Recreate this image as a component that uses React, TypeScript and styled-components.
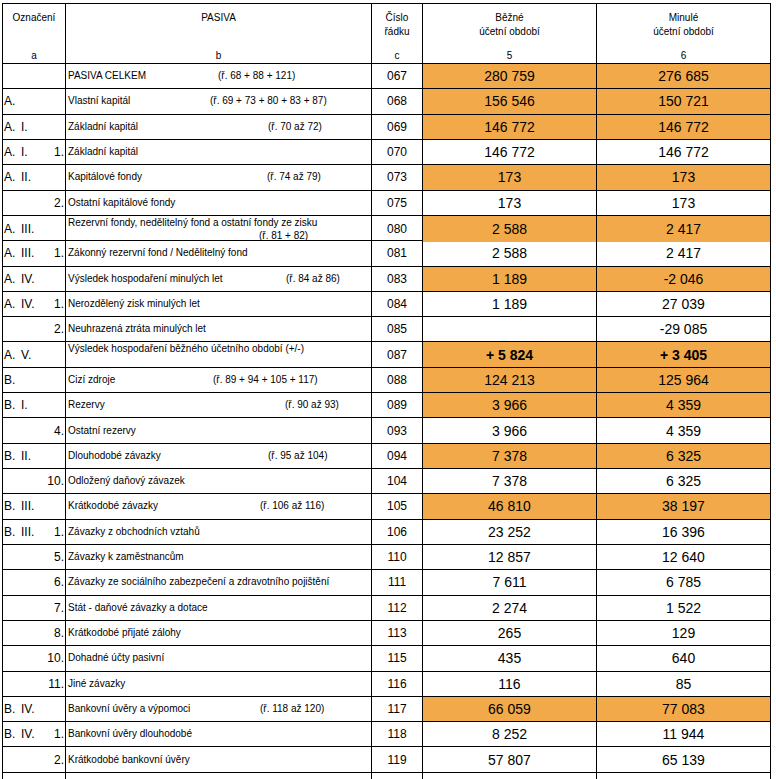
import React from 'react';
import styled, { createGlobalStyle } from 'styled-components';

const GlobalStyle = createGlobalStyle`
  html, body { margin: 0; padding: 0; background: #ffffff; }
  body { font-family: "Liberation Sans", Arial, sans-serif; color: #000; }
`;

const COLS = '63px 306px 51px 174px 174px';
const ORANGE = '#f1a94a';
const ROW_H = 25.32;

const Sheet = styled.div`
  margin: 3px 0 0 2px;
  width: 768px;
  border-left: 1px solid #000;
  border-top: 1px solid #000;
  display: flex;
  flex-direction: column;
`;

const HeaderRow = styled.div`
  display: grid;
  grid-template-columns: ${COLS};
  height: 60px;
  box-sizing: border-box;
  border-bottom: 1px solid #000;
`;

const HeaderCell = styled.div`
  box-sizing: border-box;
  border-right: 1px solid #000;
  display: flex;
  flex-direction: column;
  align-items: center;
  justify-content: space-between;
  padding-top: 7px;
  font-size: 10px;
  line-height: 14px;
  text-align: center;
  white-space: nowrap;
`;

const HeaderTitle = styled.div`
  display: flex;
  flex-direction: column;
  align-items: center;
`;

const HeaderKey = styled.div`
  font-size: 10px;
  line-height: 14px;
`;

const Row = styled.div<{ $h: number }>`
  display: grid;
  grid-template-columns: ${COLS};
  height: ${(p) => p.$h}px;
  box-sizing: border-box;
  border-bottom: 1px solid #000;
`;

const MarkCell = styled.div`
  box-sizing: border-box;
  border-right: 1px solid #000;
  display: grid;
  grid-template-columns: 17px 1fr auto;
  align-items: center;
  padding: 0 1px;
  font-size: 12px;
  white-space: nowrap;
`;

const NumMark = styled.span`
  text-align: right;
`;

const LabelCell = styled.div<{ $off: number; $top?: boolean }>`
  box-sizing: border-box;
  border-right: 1px solid #000;
  display: grid;
  grid-template-columns: ${(p) => p.$off}px 1fr;
  align-items: center;
  align-content: ${(p) => (p.$top ? 'start' : 'center')};
  padding-left: 2px;
  font-size: 10px;
  line-height: ${(p) => (p.$top ? '13px' : '12px')};
  white-space: nowrap;
  overflow: visible;
`;

const Label = styled.span<{ $wide?: boolean }>`
  grid-column: ${(p) => (p.$wide ? '1 / span 2' : '1')};
`;

const Formula = styled.span`
  grid-column: 2;
`;

const LineCell = styled.div`
  box-sizing: border-box;
  border-right: 1px solid #000;
  display: flex;
  align-items: center;
  justify-content: center;
  font-size: 12px;
`;

const ValueCell = styled.div<{ $hl?: boolean; $bold?: boolean }>`
  box-sizing: border-box;
  border-right: 1px solid #000;
  background: ${(p) => (p.$hl ? ORANGE : 'transparent')};
  display: flex;
  align-items: center;
  justify-content: center;
  font-size: 14px;
  font-weight: ${(p) => (p.$bold ? 700 : 400)};
`;

type Item = {
  l?: string;
  r?: string;
  n?: string;
  label: string;
  f?: string;
  fx?: number;
  two?: boolean;
  top?: boolean;
  c: string;
  v5: string;
  v6: string;
  hl?: boolean;
  bold?: boolean;
};

const rows: Item[] = [
  { label: 'PASIVA CELKEM', f: '(ř. 68 + 88 + 121)', fx: 218, c: '067', v5: '280 759', v6: '276 685', hl: true },
  { l: 'A.', label: 'Vlastní kapitál', f: '(ř. 69 + 73 + 80 + 83 + 87)', fx: 210, c: '068', v5: '156 546', v6: '150 721', hl: true },
  { l: 'A.', r: 'I.', label: 'Základní kapitál', f: '(ř. 70 až 72)', fx: 268, c: '069', v5: '146 772', v6: '146 772', hl: true },
  { l: 'A.', r: 'I.', n: '1.', label: 'Základní kapitál', c: '070', v5: '146 772', v6: '146 772' },
  { l: 'A.', r: 'II.', label: 'Kapitálové fondy', f: '(ř. 74 až 79)', fx: 267, c: '073', v5: '173', v6: '173', hl: true },
  { n: '2.', label: 'Ostatní kapitálové fondy', c: '075', v5: '173', v6: '173' },
  { l: 'A.', r: 'III.', label: 'Rezervní fondy, nedělitelný fond a ostatní fondy ze zisku', f: '(ř. 81 + 82)', fx: 259, two: true, top: true, c: '080', v5: '2 588', v6: '2 417', hl: true },
  { l: 'A.', r: 'III.', n: '1.', label: 'Zákonný rezervní fond / Nedělitelný fond', c: '081', v5: '2 588', v6: '2 417' },
  { l: 'A.', r: 'IV.', label: 'Výsledek hospodaření minulých let', f: '(ř. 84 až 86)', fx: 286, c: '083', v5: '1 189', v6: '-2 046', hl: true },
  { l: 'A.', r: 'IV.', n: '1.', label: 'Nerozdělený zisk minulých let', c: '084', v5: '1 189', v6: '27 039' },
  { n: '2.', label: 'Neuhrazená ztráta minulých let', c: '085', v5: '', v6: '-29 085' },
  { l: 'A.', r: 'V.', label: 'Výsledek hospodaření běžného účetního období (+/-)', top: true, c: '087', v5: '+ 5 824', v6: '+ 3 405', hl: true, bold: true },
  { l: 'B.', label: 'Cizí zdroje', f: '(ř. 89 + 94 + 105 + 117)', fx: 213, c: '088', v5: '124 213', v6: '125 964', hl: true },
  { l: 'B.', r: 'I.', label: 'Rezervy', f: '(ř. 90 až 93)', fx: 285, c: '089', v5: '3 966', v6: '4 359', hl: true },
  { n: '4.', label: 'Ostatní rezervy', c: '093', v5: '3 966', v6: '4 359' },
  { l: 'B.', r: 'II.', label: 'Dlouhodobé závazky', f: '(ř. 95 až 104)', fx: 268, c: '094', v5: '7 378', v6: '6 325', hl: true },
  { n: '10.', label: 'Odložený daňový závazek', c: '104', v5: '7 378', v6: '6 325' },
  { l: 'B.', r: 'III.', label: 'Krátkodobé závazky', f: '(ř. 106 až 116)', fx: 260, c: '105', v5: '46 810', v6: '38 197', hl: true },
  { l: 'B.', r: 'III.', n: '1.', label: 'Závazky z obchodních vztahů', c: '106', v5: '23 252', v6: '16 396' },
  { n: '5.', label: 'Závazky k zaměstnancům', c: '110', v5: '12 857', v6: '12 640' },
  { n: '6.', label: 'Závazky ze sociálního zabezpečení a zdravotního pojištění', c: '111', v5: '7 611', v6: '6 785' },
  { n: '7.', label: 'Stát - daňové závazky a dotace', c: '112', v5: '2 274', v6: '1 522' },
  { n: '8.', label: 'Krátkodobé přijaté zálohy', c: '113', v5: '265', v6: '129' },
  { n: '10.', label: 'Dohadné účty pasivní', c: '115', v5: '435', v6: '640' },
  { n: '11.', label: 'Jiné závazky', c: '116', v5: '116', v6: '85' },
  { l: 'B.', r: 'IV.', label: 'Bankovní úvěry a výpomoci', f: '(ř. 118 až 120)', fx: 260, c: '117', v5: '66 059', v6: '77 083', hl: true },
  { l: 'B.', r: 'IV.', n: '1.', label: 'Bankovní úvěry dlouhodobé', c: '118', v5: '8 252', v6: '11 944' },
  { n: '2.', label: 'Krátkodobé bankovní úvěry', c: '119', v5: '57 807', v6: '65 139' },
  { label: '', c: '', v5: '', v6: '' },
];

const LABEL_X = 68;

export default function App() {
  return (
    <>
      <GlobalStyle />
      <Sheet>
        <HeaderRow>
          <HeaderCell>
            <HeaderTitle>Označení</HeaderTitle>
            <HeaderKey>a</HeaderKey>
          </HeaderCell>
          <HeaderCell>
            <HeaderTitle>PASIVA</HeaderTitle>
            <HeaderKey>b</HeaderKey>
          </HeaderCell>
          <HeaderCell>
            <HeaderTitle>
              <span>Číslo</span>
              <span>řádku</span>
            </HeaderTitle>
            <HeaderKey>c</HeaderKey>
          </HeaderCell>
          <HeaderCell>
            <HeaderTitle>
              <span>Běžné</span>
              <span>účetní období</span>
            </HeaderTitle>
            <HeaderKey>5</HeaderKey>
          </HeaderCell>
          <HeaderCell>
            <HeaderTitle>
              <span>Minulé</span>
              <span>účetní období</span>
            </HeaderTitle>
            <HeaderKey>6</HeaderKey>
          </HeaderCell>
        </HeaderRow>
        {rows.map((r, i) => (
          <Row key={i} $h={ROW_H}>
            <MarkCell>
              <span>{r.l ?? ''}</span>
              <span>{r.r ?? ''}</span>
              <NumMark>{r.n ?? ''}</NumMark>
            </MarkCell>
            <LabelCell $off={(r.fx ?? 300) - LABEL_X} $top={r.top}>
              <Label $wide={r.two || r.top || !r.f}>{r.label}</Label>
              {r.f ? <Formula>{r.f}</Formula> : null}
            </LabelCell>
            <LineCell>{r.c}</LineCell>
            <ValueCell $hl={r.hl} $bold={r.bold}>{r.v5}</ValueCell>
            <ValueCell $hl={r.hl} $bold={r.bold}>{r.v6}</ValueCell>
          </Row>
        ))}
      </Sheet>
    </>
  );
}
